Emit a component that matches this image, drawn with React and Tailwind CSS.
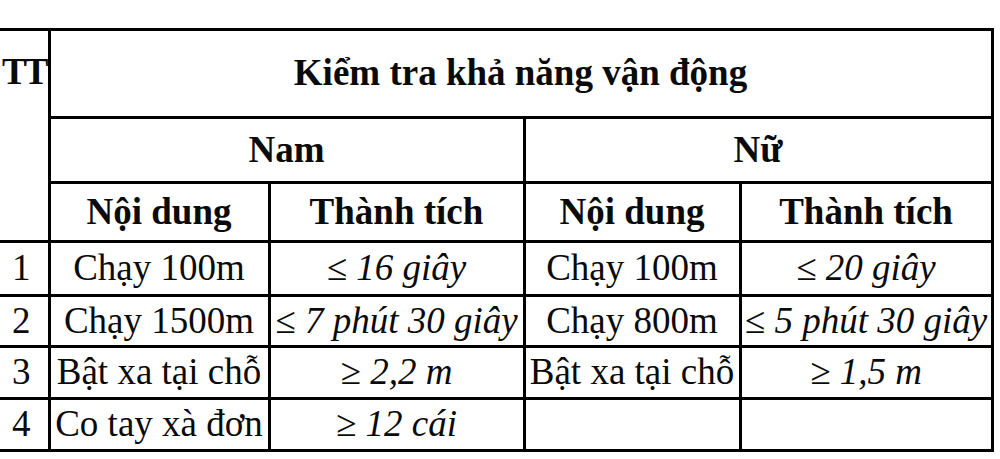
import React from 'react';

const rows = [
  { tt: '1', nam: 'Chạy 100m', namKq: '≤ 16 giây', nu: 'Chạy 100m', nuKq: '≤ 20 giây' },
  { tt: '2', nam: 'Chạy 1500m', namKq: '≤ 7 phút 30 giây', nu: 'Chạy 800m', nuKq: '≤ 5 phút 30 giây' },
  { tt: '3', nam: 'Bật xa tại chỗ', namKq: '≥ 2,2 m', nu: 'Bật xa tại chỗ', nuKq: '≥ 1,5 m' },
  { tt: '4', nam: 'Co tay xà đơn', namKq: '≥ 12 cái', nu: '', nuKq: '' },
];

const rowHeights = ['h-[54px]', 'h-[51px]', 'h-[52px]', 'h-[52px]'];

export default function App() {
  const cell = 'border-[3px] border-black p-0 text-center align-middle whitespace-nowrap';

  return (
    <div
      className="w-[1000px] h-[459px] overflow-hidden bg-white text-[#0a0a0a] pt-[28px]"
      style={{ fontFamily: '"Liberation Serif", "Times New Roman", serif' }}
    >
      <table className="border-collapse table-fixed ml-[-5px] w-[997px] text-[37px] leading-[1.15]">
        <colgroup>
          <col className="w-[54px]" />
          <col className="w-[220px]" />
          <col className="w-[255px]" />
          <col className="w-[216px]" />
          <col className="w-[252px]" />
        </colgroup>
        <tbody>
          <tr className="h-[88px]">
            <th rowSpan={3} className={`${cell} border-l-0 align-top pt-[20px] text-left pl-[7px] font-bold`}>
              <span className="inline-block w-[43px] tracking-[-3px]">TT</span>
            </th>
            <th colSpan={4} className={`${cell} font-bold`}>
              Kiểm tra khả năng vận động
            </th>
          </tr>
          <tr className="h-[65px]">
            <th colSpan={2} className={`${cell} font-bold`}>Nam</th>
            <th colSpan={2} className={`${cell} font-bold`}>Nữ</th>
          </tr>
          <tr className="h-[59px]">
            <th className={`${cell} font-bold`}>Nội dung</th>
            <th className={`${cell} font-bold`}>Thành tích</th>
            <th className={`${cell} font-bold`}>Nội dung</th>
            <th className={`${cell} font-bold`}>Thành tích</th>
          </tr>
          {rows.map((r, i) => (
            <tr key={r.tt} className={rowHeights[i]}>
              <td className={`${cell} border-l-0`}>{r.tt}</td>
              <td className={cell}>{r.nam}</td>
              <td className={`${cell} italic`}>{r.namKq}</td>
              <td className={cell}>{r.nu}</td>
              <td className={`${cell} italic`}>{r.nuKq}</td>
            </tr>
          ))}
        </tbody>
      </table>
    </div>
  );
}
